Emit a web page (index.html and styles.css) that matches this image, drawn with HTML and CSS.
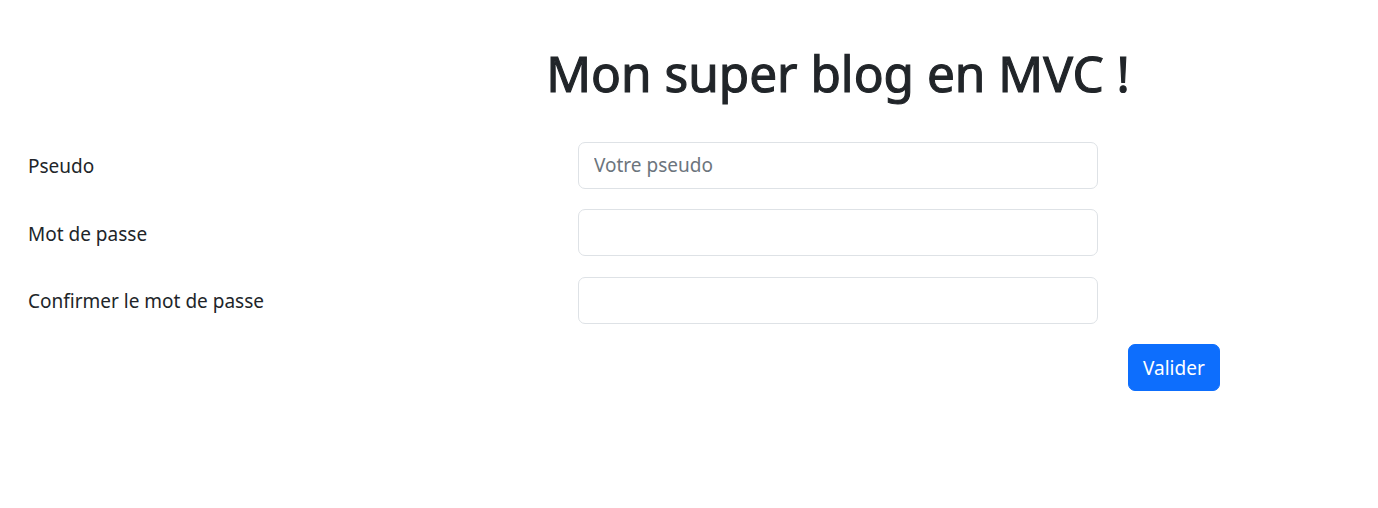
FILE: index.html
```html
<!DOCTYPE html>
<html lang="fr">
<head>
<meta charset="utf-8">
<title>Mon super blog en MVC !</title>
<link rel="stylesheet" href="styles.css">
</head>
<body>
<main class="page">
  <form class="form-grid">
    <h1 class="title">Mon super blog en MVC !</h1>
    <label class="label" for="pseudo">Pseudo</label>
    <input class="field" id="pseudo" type="text" placeholder="Votre pseudo">
    <label class="label" for="pass">Mot de passe</label>
    <input class="field" id="pass" type="password">
    <label class="label" for="pass2">Confirmer le mot de passe</label>
    <input class="field" id="pass2" type="password">
    <button class="btn" type="submit">Valider</button>
  </form>
</main>
</body>
</html>
```
FILE: styles.css
```css
* { box-sizing: border-box; }
html, body { margin: 0; padding: 0; background: #fff; }
body {
  font-family: "Noto Sans", "Open Sans", sans-serif;
  color: #212529;
  font-size: 19px;
}
.page {
  padding: 37px 0 0 28px;
}
.form-grid {
  display: grid;
  grid-template-columns: 520px 520px 1fr;
  column-gap: 30px;
  row-gap: 20.5px;
  align-items: center;
}
.title {
  grid-column: 2;
  margin: 0 0 12px;
  font-size: 49.5px;
  font-weight: 400;
  -webkit-text-stroke: 1.1px #212529;
  line-height: 72px;
  white-space: nowrap;
  display: flex;
  justify-content: center;
}
.label {
  grid-column: 1;
  font-size: 19px;
  color: #212529;
  padding-top: 2px;
}
.field {
  grid-column: 2;
  height: 47px;
  width: 520px;
  border: 1px solid #dee2e6;
  border-radius: 7px;
  padding: 0 15px;
  font-family: inherit;
  font-size: 19px;
  color: #212529;
}
.field::placeholder { color: #6c757d; }
.btn {
  grid-column: 3;
  grid-row: 5;
  justify-self: start;
  height: 47px;
  padding: 0 14px;
  border: 1px solid #0d6efd;
  background: #0d6efd;
  color: #fff;
  border-radius: 7px;
  font-family: inherit;
  font-size: 19px;
}
```
